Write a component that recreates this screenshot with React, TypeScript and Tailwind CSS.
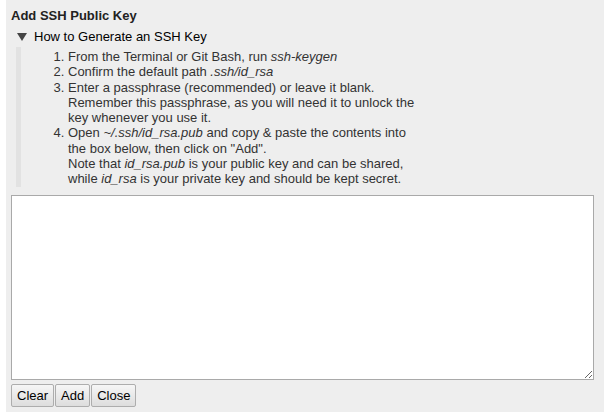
import { useState } from 'react'

const steps = [
  <>From the Terminal or Git Bash, run <i>ssh-keygen</i></>,
  <>Confirm the default path <i>.ssh/id_rsa</i></>,
  <>
    Enter a passphrase (recommended) or leave it blank.
    <br />
    Remember this passphrase, as you will need it to unlock the
    <br />
    key whenever you use it.
  </>,
  <>
    Open <i>~/.ssh/id_rsa.pub</i> and copy &amp; paste the contents into
    <br />
    the box below, then click on "Add".
    <br />
    Note that <i>id_rsa.pub</i> is your public key and can be shared,
    <br />
    while <i>id_rsa</i> is your private key and should be kept secret.
  </>
]

function WinButton({ label, onClick }: { label: string; onClick?: () => void }) {
  return (
    <button
      onClick={onClick}
      className="h-[23px] px-[5px] border border-[#adadad] rounded-[2px] bg-gradient-to-b from-[#f6f6f6] to-[#dddddd] font-['Liberation_Sans',Arial,sans-serif] text-[13px] leading-none text-black"
    >
      {label}
    </button>
  )
}

export default function App() {
  const [key, setKey] = useState('')
  const [open, setOpen] = useState(true)

  return (
    <div className="bg-white w-[604px] h-[419px] pl-[6px] font-['Liberation_Sans',Arial,sans-serif]">
      <div className="bg-[#eeeeee] h-[412px] pl-[5px] pr-[10px] pt-[8px] text-[#222]">
        <div className="text-[13px] font-bold leading-[15px]">Add SSH Public Key</div>

        {/* Disclosure */}
        <div
          onClick={() => setOpen(!open)}
          className="mt-[6px] flex items-center text-[13px] leading-[15px] text-black cursor-pointer select-none"
        >
          <span className="ml-[6px] mr-[7px] w-0 h-0 border-l-[5px] border-r-[5px] border-t-[8px] border-l-transparent border-r-transparent border-t-[#444]" />
          How to Generate an SSH Key
        </div>

        {open && (
          <div className="mt-[3px] ml-[5px] border-l-[5px] border-[#e2e2e2] pt-[2px] pb-[1px]">
            <ol className="list-decimal pl-[47px] text-[13px] leading-[15.25px] text-[#333]">
              {steps.map((s, i) => (
                <li key={i}>{s}</li>
              ))}
            </ol>
          </div>
        )}

        <textarea
          value={key}
          onChange={(e) => setKey(e.target.value)}
          className="block mt-[8px] w-[583px] h-[185px] bg-white border border-[#a9a9a9] outline-none p-[2px] font-['Liberation_Mono',monospace] text-[13px] resize"
        />

        <div className="mt-[4px] flex gap-[1px]">
          <WinButton label="Clear" onClick={() => setKey('')} />
          <WinButton label="Add" />
          <WinButton label="Close" />
        </div>
      </div>
    </div>
  )
}
